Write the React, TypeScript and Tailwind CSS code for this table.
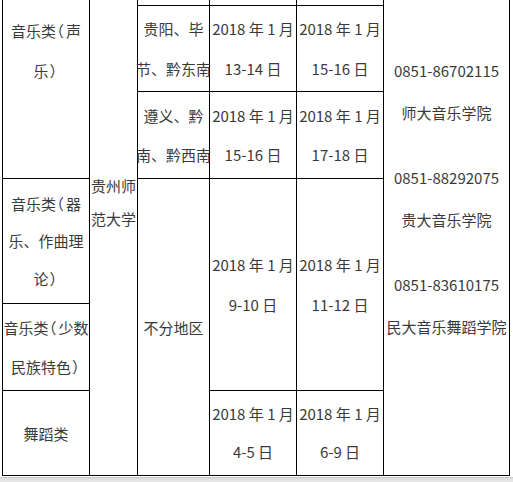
import React from "react";

const font = {
  fontFamily: '"Noto Sans CJK SC", "Noto Sans", sans-serif',
};

function Cell({
  className = "",
  children,
}: {
  className?: string;
  children?: React.ReactNode;
}) {
  return (
    <div
      className={
        "bg-white flex items-center justify-center text-center whitespace-nowrap " +
        className
      }
    >
      {children}
    </div>
  );
}

function Lines({
  lines,
  lead = "leading-[39px]",
}: {
  lines: React.ReactNode[];
  lead?: string;
}) {
  return (
    <div className={lead}>
      {lines.map((l, i) => (
        <div key={i}>{l}</div>
      ))}
    </div>
  );
}

/* "音乐类（" with the full-width bracket drawn narrower, as in the reference */
const Head = () => (
  <>
    音乐<span className="tracking-[-7px]">类</span>
    <span className="tracking-[2px]">（</span>
  </>
);
const RP = () => <span className="tracking-[-6px] pl-[1px]">）</span>;

export default function App() {
  return (
    <div
      className="w-[513px] h-[482px] overflow-hidden bg-white flex flex-col text-[15px] text-[#3a3a3a]"
      style={font}
    >
      <div className="-mt-[78px] ml-[2px] w-[508px] bg-black p-px grid gap-px grid-cols-[86px_47px_71px_86px_86px_125px] grid-rows-[82px_85px_86px_124px_86px_84px] shrink-0">
        {/* column 1 */}
        <Cell className="col-start-1 row-start-1 row-span-3">
          <Lines
            lines={[
              <>
                <Head />声
              </>,
              <>
                乐<RP />
              </>,
            ]}
            lead="leading-[40px]"
          />
        </Cell>
        <Cell className="col-start-1 row-start-4">
          <Lines
            lines={[
              <>
                <Head />器
              </>,
              "乐、作曲理",
              <>
                论<RP />
              </>,
            ]}
            lead="leading-[37.5px]"
          />
        </Cell>
        <Cell className="col-start-1 row-start-5">
          <Lines
            lines={[
              <>
                <Head />少数
              </>,
              <>
                民族特色<RP />
              </>,
            ]}
          />
        </Cell>
        <Cell className="col-start-1 row-start-6">
          <Lines lines={["舞蹈类"]} />
        </Cell>

        {/* column 2 */}
        <Cell className="col-start-2 row-start-1 row-span-6 pt-[5px]">
          <Lines lines={["贵州师", "范大学"]} lead="leading-[33px]" />
        </Cell>

        {/* header row (cut off) */}
        <Cell className="col-start-3 row-start-1" />
        <Cell className="col-start-4 row-start-1" />
        <Cell className="col-start-5 row-start-1" />

        {/* row 1 */}
        <Cell className="col-start-3 row-start-2">
          <Lines lines={["贵阳、毕", "节、黔东南"]} lead="leading-[40px]" />
        </Cell>
        <Cell className="col-start-4 row-start-2">
          <Lines lines={["2018 年 1 月", "13-14 日"]} lead="leading-[40px]" />
        </Cell>
        <Cell className="col-start-5 row-start-2">
          <Lines lines={["2018 年 1 月", "15-16 日"]} lead="leading-[40px]" />
        </Cell>

        {/* row 2 */}
        <Cell className="col-start-3 row-start-3">
          <Lines lines={["遵义、黔", "南、黔西南"]} />
        </Cell>
        <Cell className="col-start-4 row-start-3">
          <Lines lines={["2018 年 1 月", "15-16 日"]} />
        </Cell>
        <Cell className="col-start-5 row-start-3">
          <Lines lines={["2018 年 1 月", "17-18 日"]} />
        </Cell>

        {/* rows 3-5 */}
        <Cell className="col-start-3 row-start-4 row-span-3">
          <Lines lines={["不分地区"]} />
        </Cell>
        <Cell className="col-start-4 row-start-4 row-span-2">
          <Lines lines={["2018 年 1 月", "9-10 日"]} lead="leading-[40px]" />
        </Cell>
        <Cell className="col-start-5 row-start-4 row-span-2">
          <Lines lines={["2018 年 1 月", "11-12 日"]} lead="leading-[40px]" />
        </Cell>
        <Cell className="col-start-4 row-start-6">
          <Lines lines={["2018 年 1 月", "4-5 日"]} lead="leading-[38px]" />
        </Cell>
        <Cell className="col-start-5 row-start-6">
          <Lines lines={["2018 年 1 月", "6-9 日"]} lead="leading-[38px]" />
        </Cell>

        {/* column 6 */}
        <Cell className="col-start-6 row-start-1 row-span-6">
          <div className="flex flex-col gap-[23px] leading-[42px]">
            <div>
              <div>0851-86702115</div>
              <div>师大音乐学院</div>
            </div>
            <div>
              <div>0851-88292075</div>
              <div>贵大音乐学院</div>
            </div>
            <div>
              <div>0851-83610175</div>
              <div>民大音乐舞蹈学院</div>
            </div>
          </div>
        </Cell>
      </div>
      <div className="mt-[1px] h-[6px] shrink-0 border-t border-[#c9c9c9] bg-gradient-to-b from-[#dcdcdc] to-[#ececec]" />
    </div>
  );
}
